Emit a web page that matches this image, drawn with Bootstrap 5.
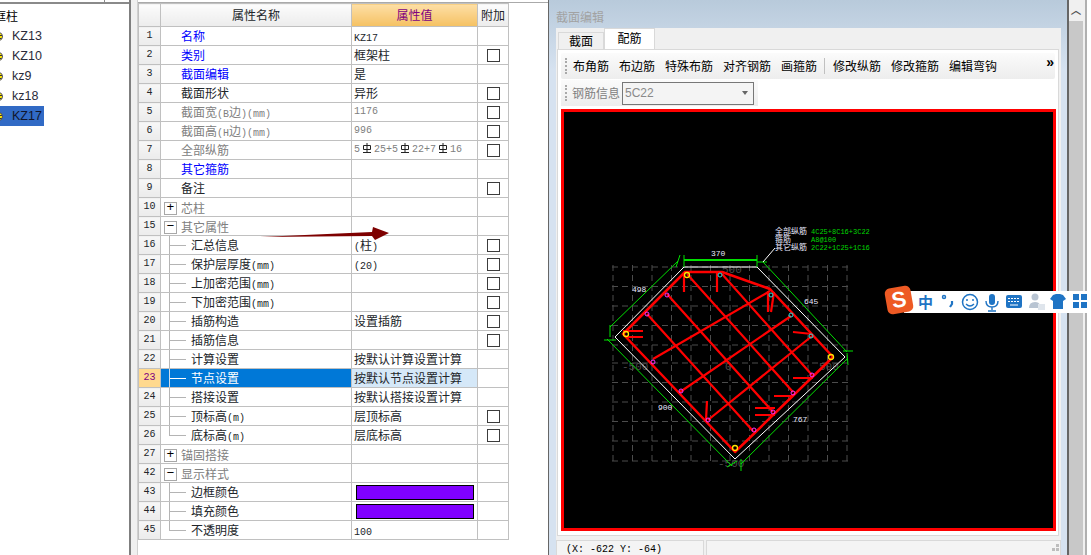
<!DOCTYPE html>
<html lang="zh-CN">
<head>
  <meta charset="UTF-8">
  <title>截面编辑</title>
  <link href="https://cdn.jsdelivr.net/npm/bootstrap@5.3.0/dist/css/bootstrap.min.css" rel="stylesheet">
  <style>
    html, body { margin: 0; height: 555px; overflow: hidden; background: #fff; }
    body { font-family: "Noto Sans CJK SC", "Liberation Sans", sans-serif; font-size: 12px; color: #000; }
    .app { width: 1091px; height: 555px; overflow: hidden; }
    .lat { font-family: "Liberation Mono", monospace; font-size: 10px; line-height: 1; }

    /* left tree */
    .tree-pane { width: 131px; flex: none; border-right: 2px solid #7f7f7f; }
    .tree-top { height: 4px; border-bottom: 2px solid #8a8a8a; width: 129px; }
    .tree-top div { width: 105px; height: 3px; border-right: 1px solid #8a8a8a; }
    .tree-root { height: 21px; line-height: 22px; margin-left: -6px; font-size: 12px; margin-top: 1px; }
    .tree-item { height: 20px; line-height: 20px; font-family: "Liberation Sans", sans-serif; font-size: 12.5px; color: #2b2b3a; width: 44px; gap: 5px; }
    .tree-item.picked { background: #316ac5; color: #10152c; }
    .tree-dot { width: 10px; height: 9px; margin-left: -7px; border-radius: 50%; background: repeating-linear-gradient(#ffe600 0 2px, #333 2px 3px); flex: none; border: 1px solid #555; }
    .gutter { width: 7px; flex: none; background: #f0f0f0; border-right: 1px solid #d0d0d0; }

    /* property grid */
    .grid-pane { width: 411px; flex: none; padding-top: 3px; border-right: 1px solid #666; background: linear-gradient(#aaa, #aaa) 0 2px/100% 1px no-repeat; }
    .c-idx { width: 22px; } .c-name { width: 191px; } .c-val { width: 126px; } .c-add { width: 31px; }
    .prop-table { width: 371px; table-layout: fixed; --bs-table-border-color: #c0c0c0; border-color: #c0c0c0; margin: 0; font-size: 12px; line-height: 14px; }
    .prop-table>:not(caption)>*>* { padding: 0; height: 19px; white-space: nowrap; overflow: hidden; vertical-align: middle; box-shadow: none; }
    .prop-table>thead>tr>th { height: 23px; font-weight: 400; text-align: center; background: linear-gradient(#fcfcfc, #ececec); }
    .prop-table>thead>tr>th.val-head { background: linear-gradient(#fddfa6, #f5c162); color: #800080; }
    .prop-table>tbody>tr>td.idx { text-align: center; background: linear-gradient(#f7f7f7, #ebebeb); font-family: "Liberation Mono", monospace; font-size: 10px; }
    .prop-table>tbody>tr>td.name { padding-left: 20px; }
    .prop-table>tbody>tr>td.val { padding-left: 2px; }
    .prop-table>tbody>tr>td.extra { text-align: center; }
    .prop-table>tbody>tr>td.blue { color: #0000ff; }
    .prop-table>tbody>tr>td.dim { color: #808080; }
    .prop-table>tbody>tr>td.val.dim { font-size: 10px; font-family: "Liberation Mono", monospace; }
    .prop-table>tbody>tr>td.kid { padding-left: 30px; background: linear-gradient(#b4b4b4, #b4b4b4) 8px 0/1px 100% no-repeat, linear-gradient(#b4b4b4, #b4b4b4) 8px 9px/17px 1px no-repeat; }
    .prop-table>tbody>tr>td.kid.last { background: linear-gradient(#b4b4b4, #b4b4b4) 8px 0/1px 10px no-repeat, linear-gradient(#b4b4b4, #b4b4b4) 8px 9px/17px 1px no-repeat; }
    .prop-table>tbody>tr>td.grp { padding-left: 3px; color: #808080; }
    .grp-line { padding-top: 2px; gap: 4px; }
    .prop-table>tbody>tr.hot>td.idx { background: #ffd98f; color: #800080; }
    .prop-table>tbody>tr.hot>td.kid { color: #fff; background: linear-gradient(#cde, #cde) 8px 0/1px 100% no-repeat, linear-gradient(#fff, #fff) 8px 9px/17px 1px no-repeat, #0078d7; }
    .prop-table>tbody>tr.hot>td.val { background: #d5e8f8; }
    .prop-table .form-check-input { width: 13px; height: 13px; margin: 0 0 0 9px; border: 1px solid #3c3c3c; border-radius: 0; display: block; }
    .pm { display: block; flex: none; width: 13px; height: 13px; border: 1px solid #a8a8a8; color: #000; line-height: 10px; text-align: center; font-family: "Liberation Mono", monospace; font-size: 13px; background: #fff; }
    .swatch { display: block; width: 118px; height: 15px; margin-left: 2px; border: 1px solid #000; background: #8000ff; }
    .rebar { width: 10px; height: 11px; vertical-align: -2px; margin: 0 2px; }

    /* section dialog */
    .sect-dlg { width: 520px; flex: none; padding: 0 7px; background: linear-gradient(#b8cadb 0, #d6e2f0 70px); border-right: 2px solid #666; }
    .dlg-title { height: 28px; line-height: 34px; color: #a2a2a2; }
    .dlg-body { height: 527px; background: #f0f0f0; margin-right: -1px; }
    .tab-strip { height: 21px; padding-left: 2px; }
    .tab-off { width: 46px; height: 17px; margin-top: 4px; line-height: 15px; text-align: center; background: #f0f0f0; border: 1px solid #d9d9d9; border-bottom: 0; }
    .tab-on { width: 51px; height: 21px; line-height: 18px; text-align: center; background: #fff; border: 1px solid #d9d9d9; border-bottom: 0; }
    .tab-page { height: 487px; margin-left: 1px; margin-right: 2px; background: #fff; border: 1px solid #d9d9d9; padding: 3px 3px 0 3px; }
    .bar-one { height: 26px; gap: 10px; padding-left: 4px; background: linear-gradient(#fbfbfb, #ededed); border-radius: 2px; }
    .bar-two { height: 26px; margin-top: 1px; padding-left: 4px; gap: 2px; background: linear-gradient(#fbfbfb, #ededed); width: 197px; }
    .grip { width: 2px; height: 16px; border-left: 2px dotted #a9a9a9; margin-right: 1px; flex: none; }
    .bar-one .grip { margin-right: -4px; }
    .bar-label { margin-left: 2px; white-space: nowrap; flex: none; color: #808080; }
    .bar-sep { width: 1px; height: 16px; background: #c0c0c0; margin: 0 -2px 0 -3px; }
    .bar-more { margin-left: auto; margin-right: 1px; margin-top: -8px; font-family: "Liberation Sans", sans-serif; font-weight: 700; line-height: 1; font-size: 14px; }
    .rebar-box { width: 132px; height: 23px; flex: none; border: 1px solid #777; padding-left: 2px; color: #8a8a8a; background: #f4f4f4; line-height: 21px; font-family: "Liberation Sans", sans-serif; }
    .caret-down { width: 0; height: 0; border: 3px solid transparent; border-top: 4px solid #666; margin: 3px 5px 0 auto; }
    .cad-frame { width: 495px; height: 422px; border: 3px solid #f00; background: #000; margin-top: 3px; }
    .cad-frame svg { display: block; }
    .cad-frame text { font-family: "Liberation Mono", monospace; font-size: 8px; }
    .status-row { height: 15px; gap: 2px; margin-top: 4px; }
    .status-cell { border: 1px solid #d9d9d9; border-bottom: 0; line-height: 18px; background: #f4f4f4; font-family: "Liberation Mono", monospace; font-size: 10px; padding-left: 9px; }
    .status-xy { width: 148px; flex: none; }
    .size-grip { display: block; margin: 3px 0 0 auto; }

    /* scroll strip */
    .scroll-strip { width: 16px; flex: none; background: #f0f0f0; padding: 3px 2px 0 0; }
    .scroll-up { height: 18px; line-height: 16px; text-align: center; font-size: 10px; font-family: "Liberation Sans", sans-serif; font-weight: 700; color: #555; }
    .scroll-thumb { height: 540px; background: #c8c8c8; }
    .edge-line { width: 2px; flex: none; background: #b0b0b0; }

    /* overlays */
    .red-arrow { position: absolute; left: 255px; top: 222px; }
    .ime-bar { position: absolute; left: 904px; top: 291px; width: 187px; height: 22px; background: #fff; }
    .ime-logo { position: absolute; left: 886px; top: 287px; width: 26px; height: 26px; background: #ee5a24; color: #fff; border-radius: 5px; transform: rotate(-10deg); font: 700 22px/26px "Liberation Sans", sans-serif; text-align: center; }
    .ime-zh { position: absolute; left: 918px; top: 292px; font-size: 15px; font-weight: 700; line-height: 20px; color: #1f74c4; }
    .ime-icons { position: absolute; left: 940px; top: 292px; }
  </style>
</head>
<body>
<div class="app d-flex position-relative">

  <div class="tree-pane">
    <div class="tree-top"><div></div></div>
    <div class="tree-root">框柱</div>
    <div class="tree-item d-flex align-items-center"><span class="tree-dot"></span><span class="ms-1">KZ13</span></div>
    <div class="tree-item d-flex align-items-center"><span class="tree-dot"></span><span class="ms-1">KZ10</span></div>
    <div class="tree-item d-flex align-items-center"><span class="tree-dot"></span><span class="ms-1">kz9</span></div>
    <div class="tree-item d-flex align-items-center"><span class="tree-dot"></span><span class="ms-1">kz18</span></div>
    <div class="tree-item picked d-flex align-items-center"><span class="tree-dot"></span><span class="ms-1">KZ17</span></div>
  </div>
  <div class="gutter"></div>

  <div class="grid-pane">
    <table class="table table-bordered prop-table">
      <colgroup><col class="c-idx"><col class="c-name"><col class="c-val"><col class="c-add"></colgroup>
      <thead>
        <tr><th></th><th>属性名称</th><th class="val-head">属性值</th><th>附加</th></tr>
      </thead>
      <tbody>
        <tr><td class="idx">1</td><td class="name blue">名称</td><td class="val"><span class="lat">KZ17</span></td><td class="extra"></td></tr>
        <tr><td class="idx">2</td><td class="name blue">类别</td><td class="val">框架柱</td><td class="extra"><input class="form-check-input" type="checkbox"></td></tr>
        <tr><td class="idx">3</td><td class="name blue">截面编辑</td><td class="val">是</td><td class="extra"></td></tr>
        <tr><td class="idx">4</td><td class="name">截面形状</td><td class="val">异形</td><td class="extra"><input class="form-check-input" type="checkbox"></td></tr>
        <tr><td class="idx">5</td><td class="name dim">截面宽<span class="lat">(B</span>边<span class="lat">)(mm)</span></td><td class="val dim">1176</td><td class="extra"><input class="form-check-input" type="checkbox"></td></tr>
        <tr><td class="idx">6</td><td class="name dim">截面高<span class="lat">(H</span>边<span class="lat">)(mm)</span></td><td class="val dim">996</td><td class="extra"><input class="form-check-input" type="checkbox"></td></tr>
        <tr><td class="idx">7</td><td class="name dim">全部纵筋</td><td class="val dim">5<svg class="rebar" viewBox="0 0 10 11"><path d="M1.5 2.500h7v4h-7zM5 0v9M1 9.500h8" fill="none" stroke="#222"/></svg>25+5<svg class="rebar" viewBox="0 0 10 11"><path d="M1.5 2.500h7v4h-7zM5 0v9M1 9.500h8" fill="none" stroke="#222"/></svg>22+7<svg class="rebar" viewBox="0 0 10 11"><path d="M1.5 2.500h7v4h-7zM5 0v9M1 9.500h8" fill="none" stroke="#222"/></svg>16</td><td class="extra"><input class="form-check-input" type="checkbox"></td></tr>
        <tr><td class="idx">8</td><td class="name blue">其它箍筋</td><td class="val"></td><td class="extra"></td></tr>
        <tr><td class="idx">9</td><td class="name">备注</td><td class="val"></td><td class="extra"><input class="form-check-input" type="checkbox"></td></tr>
        <tr><td class="idx">10</td><td class="grp"><div class="grp-line d-flex align-items-center"><span class="pm">+</span><span>芯柱</span></div></td><td class="val"></td><td class="extra"></td></tr>
        <tr><td class="idx">15</td><td class="grp"><div class="grp-line d-flex align-items-center"><span class="pm">−</span><span>其它属性</span></div></td><td class="val"></td><td class="extra"></td></tr>
        <tr><td class="idx">16</td><td class="kid">汇总信息</td><td class="val"><span class="lat">(</span>柱<span class="lat">)</span></td><td class="extra"><input class="form-check-input" type="checkbox"></td></tr>
        <tr><td class="idx">17</td><td class="kid">保护层厚度<span class="lat">(mm)</span></td><td class="val"><span class="lat">(20)</span></td><td class="extra"><input class="form-check-input" type="checkbox"></td></tr>
        <tr><td class="idx">18</td><td class="kid">上加密范围<span class="lat">(mm)</span></td><td class="val"></td><td class="extra"><input class="form-check-input" type="checkbox"></td></tr>
        <tr><td class="idx">19</td><td class="kid">下加密范围<span class="lat">(mm)</span></td><td class="val"></td><td class="extra"><input class="form-check-input" type="checkbox"></td></tr>
        <tr><td class="idx">20</td><td class="kid">插筋构造</td><td class="val">设置插筋</td><td class="extra"><input class="form-check-input" type="checkbox"></td></tr>
        <tr><td class="idx">21</td><td class="kid">插筋信息</td><td class="val"></td><td class="extra"><input class="form-check-input" type="checkbox"></td></tr>
        <tr><td class="idx">22</td><td class="kid">计算设置</td><td class="val">按默认计算设置计算</td><td class="extra"></td></tr>
        <tr class="hot"><td class="idx">23</td><td class="kid">节点设置</td><td class="val">按默认节点设置计算</td><td class="extra"></td></tr>
        <tr><td class="idx">24</td><td class="kid">搭接设置</td><td class="val">按默认搭接设置计算</td><td class="extra"></td></tr>
        <tr><td class="idx">25</td><td class="kid">顶标高<span class="lat">(m)</span></td><td class="val">层顶标高</td><td class="extra"><input class="form-check-input" type="checkbox"></td></tr>
        <tr><td class="idx">26</td><td class="kid last">底标高<span class="lat">(m)</span></td><td class="val">层底标高</td><td class="extra"><input class="form-check-input" type="checkbox"></td></tr>
        <tr><td class="idx">27</td><td class="grp"><div class="grp-line d-flex align-items-center"><span class="pm">+</span><span>锚固搭接</span></div></td><td class="val"></td><td class="extra"></td></tr>
        <tr><td class="idx">42</td><td class="grp"><div class="grp-line d-flex align-items-center"><span class="pm">−</span><span>显示样式</span></div></td><td class="val"></td><td class="extra"></td></tr>
        <tr><td class="idx">43</td><td class="kid">边框颜色</td><td class="val"><span class="swatch"></span></td><td class="extra"></td></tr>
        <tr><td class="idx">44</td><td class="kid">填充颜色</td><td class="val"><span class="swatch"></span></td><td class="extra"></td></tr>
        <tr><td class="idx">45</td><td class="kid last">不透明度</td><td class="val"><span class="lat">100</span></td><td class="extra"></td></tr>
      </tbody>
    </table>
  </div>

  <div class="sect-dlg">
    <div class="dlg-title">截面编辑</div>
    <div class="dlg-body">
      <div class="tab-strip d-flex">
        <div class="tab-off">截面</div>
        <div class="tab-on">配筋</div>
      </div>
      <div class="tab-page">
        <div class="bar-one d-flex align-items-center">
          <span class="grip"></span>
          <span>布角筋</span><span>布边筋</span><span>特殊布筋</span><span>对齐钢筋</span><span>画箍筋</span>
          <span class="bar-sep"></span>
          <span>修改纵筋</span><span>修改箍筋</span><span>编辑弯钩</span>
          <span class="bar-more">»</span>
        </div>
        <div class="bar-two d-flex align-items-center">
          <span class="grip"></span>
          <span class="bar-label">钢筋信息</span>
          <div class="rebar-box d-flex align-items-center">5C22<span class="caret-down"></span></div>
        </div>
        <div class="cad-frame">
          <svg width="489" height="416" viewBox="564 113 489 416">
            <!-- grid -->
            <g stroke="#4c4c4c" stroke-dasharray="6 4" fill="none">
              <path d="M612 268H848M612 287.500H848M612 307H848M612 326.500H848M612 346H848M612 364H848M612 383.500H848M612 403H848M612 422.500H848M612 442H848M612 462H848"/>
              <path d="M613 266V464M632.500 266V464M652 266V464M671.500 266V464M691 266V464M710.500 266V464M730 266V464M749.500 266V464M769 266V464M788.500 266V464M808 266V464M827.500 266V464M847 266V464"/>
            </g>
            <g fill="#4c4c4c">
              <text x="722" y="274" style="font-size:11px">500</text>
              <text x="622" y="371" style="font-size:11px">-500</text>
              <text x="725" y="371" style="font-size:11px">0</text>
              <text x="819" y="371" style="font-size:11px">500</text>
              <text x="718" y="468" style="font-size:11px">-500</text>
            </g>
            <!-- outline -->
            <path d="M684 268H757L845 358L735 460L615 338Z" fill="none" stroke="#fff"/>
            <!-- dimensions -->
            <g stroke="#00e000" fill="none">
              <path d="M684 261H757" stroke-width="2"/>
              <path d="M684 256V268M757 256V268M680 256L676 268M610 326V338M604 341H616"/>
              <path d="M678 262L610 328M607 340L732 467M741 465L847 360M763 263L847 353"/>
              <path d="M727 468L737 462M741 460V472M843 352H853M847 354L848 366M757 263H767"/>
            </g>
            <!-- leader -->
            <path d="M763 263L775 249" stroke="#fff"/>
            <!-- rebar -->
            <g stroke="#f00" fill="none" stroke-width="2.200">
              <path d="M685 273H722L770 290L833 358L735 453L623 335Z" stroke-width="2.500" stroke-linejoin="round"/>
              <path d="M647 315L753 432M667 295L773 413M687 275L793 393M722 275L812 376"/>
              <path d="M653 360L770 292M680 393L791 317M708 421L812 337"/>
              <path d="M684 273V293M717 273V293M768 292V313M774 293L771 313M623 332H643M625 338H643M793 333L812 335M793 379H813M774 397H793M755 409H775M755 416H775M707 402L706 421"/>
            </g>
            <!-- bars -->
            <g fill="none" stroke="#ffe600" stroke-width="1.300"><circle cx="687" cy="276" r="2.500"/><circle cx="626" cy="335" r="2.500"/><circle cx="831" cy="358" r="2.500"/><circle cx="735" cy="449" r="2.500"/></g>
            <g fill="none" stroke="#ff30ff"><circle cx="667" cy="296" r="2"/><circle cx="647" cy="315" r="2"/><circle cx="653" cy="363" r="2"/><circle cx="681" cy="392" r="2"/><circle cx="708" cy="421" r="2"/><circle cx="754" cy="431" r="2"/><circle cx="773" cy="413" r="2"/><circle cx="793" cy="394" r="2"/><circle cx="812" cy="376" r="2"/></g>
            <g fill="none" stroke="#20e0e0"><circle cx="720" cy="276" r="2"/><circle cx="771" cy="296" r="2"/><circle cx="791" cy="316" r="2"/><circle cx="811" cy="337" r="2"/></g>
            <!-- labels -->
            <g fill="#e8e8ff">
              <text x="711" y="257">370</text><text x="632" y="293">498</text><text x="804" y="305">645</text><text x="658" y="411">900</text><text x="793" y="423">767</text>
              <text x="775" y="235">全部纵筋</text><text x="775" y="243">箍筋</text><text x="775" y="251">其它纵筋</text>
            </g>
            <g fill="#00d800">
              <text x="811" y="235" style="font-size:7px">4C25+8C16+3C22</text>
              <text x="811" y="243" style="font-size:7px">A8@100</text>
              <text x="811" y="251" style="font-size:7px">2C22+1C25+1C16</text>
            </g>
          </svg>
        </div>
      </div>
      <div class="status-row d-flex">
        <div class="status-cell status-xy">(X: -622 Y: -64)</div>
        <div class="status-cell flex-grow-1"><svg class="size-grip" width="10" height="10" viewBox="0 0 10 10"><path d="M6 0h3v3H6zM2 4h3v3H2zM6 4h3v3H6z" fill="#bdbdbd"/></svg></div>
      </div>
    </div>
  </div>

  <div class="scroll-strip">
    <div class="scroll-up">︿</div>
    <div class="scroll-thumb"></div>
  </div>
  <div class="edge-line"></div>

  <!-- overlays -->
  <svg class="red-arrow" width="140" height="22" viewBox="255 222 140 22"><path d="M260 237L372 232L373 227L389 233L375 240L372 236Z" fill="#7e0000"/></svg>
  <div class="ime-bar"></div>
  <div class="ime-logo">S</div>
  <div class="ime-zh">中</div>
  <svg class="ime-icons" width="151" height="20" viewBox="940 292 151 20">
    <circle cx="944" cy="297" r="1.500" fill="none" stroke="#1f74c4" stroke-width="1.500"/>
    <path d="M952 301V304L950 307" fill="none" stroke="#1f74c4" stroke-width="2.200"/>
    <circle cx="970" cy="302" r="7.500" fill="none" stroke="#1f74c4" stroke-width="1.500"/>
    <circle cx="967" cy="300" r="1" fill="#1f74c4"/><circle cx="973" cy="300" r="1" fill="#1f74c4"/>
    <path d="M966 304Q970 308 974 304" fill="none" stroke="#1f74c4" stroke-width="1.300"/>
    <rect x="989" y="294" width="6" height="11" rx="3" fill="#1f74c4"/>
    <path d="M986 301Q986 307 992 307Q998 307 998 301M992 307V310M988 311H996" fill="none" stroke="#1f74c4" stroke-width="1.400"/>
    <rect x="1006" y="295" width="16" height="13" rx="2" fill="#1f74c4"/>
    <path d="M1008 298.500h12M1008 301.500h12" stroke="#fff" stroke-dasharray="2 1"/><path d="M1010 305h8" stroke="#fff"/>
    <circle cx="1035" cy="297" r="3.500" fill="#b8c4d2"/>
    <path d="M1029 308Q1029 302 1035 302Q1039 302 1040 305V308Z" fill="#b8c4d2"/>
    <rect x="1038" y="304" width="7" height="6" fill="#dfe5ec"/>
    <path d="M1053 295L1056 294H1060L1063 295L1066 299L1063 301V309H1053V301L1050 299Z" fill="#1f74c4"/>
    <rect x="1073" y="294" width="6" height="6" fill="#1f74c4"/><rect x="1081" y="294" width="6" height="6" fill="#1f74c4"/>
    <rect x="1073" y="302" width="6" height="6" fill="#1f74c4"/><rect x="1081" y="302" width="6" height="6" fill="#1f74c4"/>
  </svg>
</div>
<script src="https://cdn.jsdelivr.net/npm/bootstrap@5.3.0/dist/js/bootstrap.bundle.min.js"></script>
</body>
</html>
